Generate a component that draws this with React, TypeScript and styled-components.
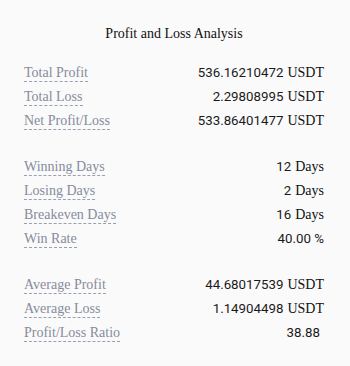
import React from 'react';
import styled, { createGlobalStyle } from 'styled-components';

const GlobalStyle = createGlobalStyle`
  body {
    margin: 0;
    padding: 0;
    background: #fafafb;
  }
`;

const Panel = styled.div`
  width: 350px;
  height: 366px;
  box-sizing: border-box;
  padding: 24px 26px 0 24px;
  background: #fafafb;
  font-family: 'Liberation Serif', 'Times New Roman', serif;
  color: #111;
`;

const Title = styled.h2`
  margin: 0 0 17px;
  font-size: 14px;
  line-height: 20px;
  font-weight: normal;
  text-align: center;
`;

const Group = styled.div`
  display: flex;
  flex-direction: column;
  & + & {
    margin-top: 22px;
  }
`;

const Row = styled.div`
  display: flex;
  align-items: center;
  justify-content: space-between;
  height: 24px;
`;

const Label = styled.span`
  display: inline-block;
  font-size: 14px;
  line-height: 16px;
  color: #868c9a;
  border-bottom: 1px dashed #98a0b0;
`;

const Value = styled.span<{ $inset?: number }>`
  font-size: 14px;
  line-height: 16px;
  white-space: nowrap;
  padding-right: ${(p) => p.$inset || 0}px;
`;

const Num = styled.span`
  font-family: Roboto, 'Liberation Sans', sans-serif;
  font-size: 13.3px;
  color: #1a1a1a;
`;

const Unit = styled.span`
  margin-left: 4px;
`;

type Item = { label: string; value: string; unit?: string; inset?: number };

const groups: Item[][] = [
  [
    { label: 'Total Profit', value: '536.16210472', unit: 'USDT' },
    { label: 'Total Loss', value: '2.29808995', unit: 'USDT' },
    { label: 'Net Profit/Loss', value: '533.86401477', unit: 'USDT' },
  ],
  [
    { label: 'Winning Days', value: '12', unit: 'Days' },
    { label: 'Losing Days', value: '2', unit: 'Days' },
    { label: 'Breakeven Days', value: '16', unit: 'Days' },
    { label: 'Win Rate', value: '40.00 %' },
  ],
  [
    { label: 'Average Profit', value: '44.68017539', unit: 'USDT' },
    { label: 'Average Loss', value: '1.14904498', unit: 'USDT' },
    { label: 'Profit/Loss Ratio', value: '38.88', inset: 4 },
  ],
];

const App = () => {
  return (
    <Panel>
      <GlobalStyle />
      <Title>Profit and Loss Analysis</Title>
      {groups.map((group, gi) => (
        <Group key={gi}>
          {group.map((item) => (
            <Row key={item.label}>
              <Label>{item.label}</Label>
              <Value $inset={item.inset}>
                <Num>{item.value}</Num>
                {item.unit && <Unit>{item.unit}</Unit>}
              </Value>
            </Row>
          ))}
        </Group>
      ))}
    </Panel>
  );
};

export default App;
